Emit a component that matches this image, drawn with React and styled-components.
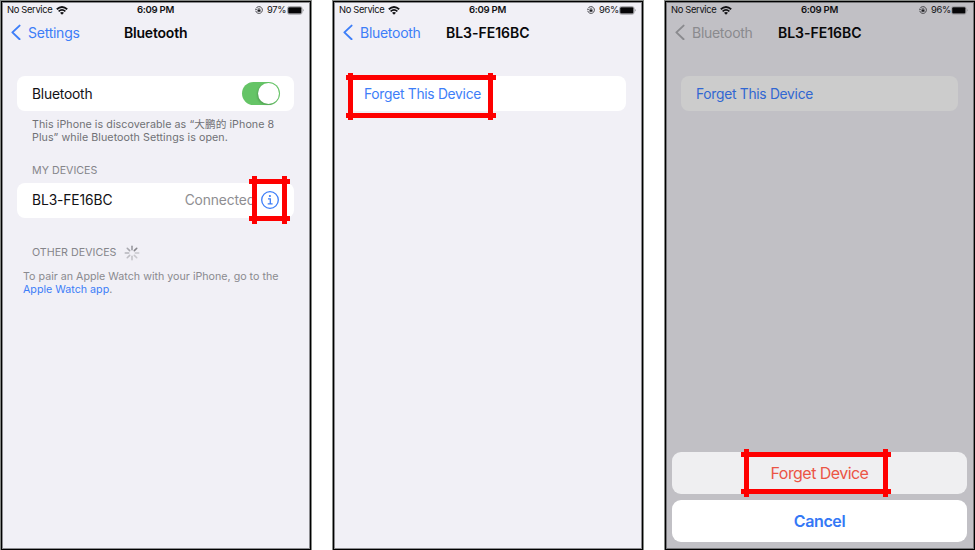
import React from "react";
import styled, { createGlobalStyle } from "styled-components";

const GlobalStyle = createGlobalStyle`
  *, *::before, *::after { box-sizing: border-box; }
  body { margin: 0; background: #fff; overflow: hidden; }
`;

const Page = styled.main`
  display: grid;
  grid-template-columns: repeat(3, 312px);
  column-gap: 20px;
  width: 975px;
  height: 550px;
  overflow: hidden;
  background: #fff;
  color: #111114;
  font-family: Inter, "Noto Sans CJK SC", sans-serif;
  white-space: nowrap;
`;

const Phone = styled.section`
  position: relative;
  display: flex;
  flex-direction: column;
  width: 312px;
  height: 551px;
  padding: 2px 2px 0;
  border: 1px solid #858885;
  border-bottom-color: #000;
  background: ${(p) => (p.$dimmed ? "#c1c0c5" : "#f1f0f6")};
  box-shadow: inset 0 0 0 1px #000, inset 0 0 0 2px ${(p) => (p.$dimmed ? "#77777a" : "#8c8c90")};
`;

const StatusBar = styled.header`
  display: grid;
  grid-template-columns: 1fr auto 1fr;
  align-items: center;
  height: 14px;
  padding: 0 5px 0 4px;
  font-size: 9.4px;
  line-height: 14px;
`;

const Carrier = styled.span`
  display: flex;
  align-items: center;
  gap: 4px;
  letter-spacing: -0.35px;
`;

const Clock = styled.span`
  font-size: 9.6px;
  font-weight: 600;
  letter-spacing: -0.3px;
`;

const Battery = styled.span`
  display: flex;
  align-items: center;
  justify-content: flex-end;
  letter-spacing: -0.35px;
`;

const Percent = styled.span`
  width: 18px;
  margin: 0 2px 0 4px;
`;

const NavBar = styled.nav`
  display: flex;
  align-items: center;
  height: 30px;
  padding-left: 7px;
`;

const Back = styled.div`
  display: flex;
  align-items: center;
  gap: 7px;
  width: ${(p) => p.$width}px;
  color: ${(p) => (p.$dimmed ? "#8a8a8e" : "#3d7ef8")};
  font-size: 14px;
  letter-spacing: ${(p) => p.$spacing}px;
`;

const Title = styled.h1`
  flex: 1;
  margin: 0;
  font-size: 14px;
  font-weight: 600;
  letter-spacing: ${(p) => p.$spacing}px;
  color: #08080a;
`;

const Card = styled.div`
  display: flex;
  align-items: center;
  width: 277px;
  height: 35px;
  margin: ${(p) => p.$top}px 0 0 14px;
  padding: 0 14px 0 15px;
  border-radius: 8px;
  background: ${(p) => (p.$dimmed ? "#cccccc" : "#fff")};
`;

const Label = styled.span`
  font-size: 13.8px;
  letter-spacing: ${(p) => p.$spacing || 0}px;
  color: ${(p) => p.$color || "#111114"};
`;

const Value = styled.span`
  margin: 0 6px 0 auto;
  font-size: 13.8px;
  letter-spacing: -0.12px;
  color: #8e8e92;
`;

const Toggle = styled.div`
  display: flex;
  justify-content: flex-end;
  align-items: center;
  width: 38px;
  height: 23px;
  margin-left: auto;
  padding-right: 1px;
  border-radius: 12px;
  background: #65c466;
`;

const Knob = styled.i`
  width: 21px;
  height: 21px;
  border-radius: 50%;
  background: #fff;
  box-shadow: -1px 1px 2px rgba(0, 0, 0, 0.18);
`;

const Note = styled.p`
  margin: ${(p) => p.$top}px 0 0 ${(p) => p.$left}px;
  font-size: 10.7px;
  line-height: 13.3px;
  letter-spacing: ${(p) => p.$spacing}px;
  color: ${(p) => p.$color};
`;

const Line = styled.span`
  display: block;
  height: 13.3px;
`;

const Link = styled.span`
  color: #3d7ef8;
`;

const SectionHead = styled.h2`
  display: flex;
  align-items: center;
  gap: 8px;
  height: 16px;
  margin: ${(p) => p.$top}px 0 0 29px;
  font-size: 10.7px;
  font-weight: 400;
  color: #85858a;
`;

const ActionSheet = styled.div`
  display: flex;
  flex-direction: column;
  gap: 6px;
  margin: auto 6px 8px 5px;
`;

const SheetButton = styled.button`
  height: 42px;
  padding: 0;
  border: 0;
  border-radius: 9px;
  background: ${(p) => (p.$cancel ? "#fff" : "#efeff1")};
  color: ${(p) => (p.$cancel ? "#3478f6" : "#eb5545")};
  font: ${(p) => (p.$cancel ? 600 : 400)} 16px Inter, sans-serif;
  letter-spacing: ${(p) => (p.$cancel ? -0.4 : -0.55)}px;
`;

const Highlight = styled.div`
  position: absolute;
  left: ${(p) => p.$x}px;
  top: ${(p) => p.$y}px;
  width: ${(p) => p.$w}px;
  height: ${(p) => p.$h}px;

  &::before,
  &::after {
    content: "";
    position: absolute;
    border: 0 solid #fe0000;
  }
  &::before {
    inset: ${(p) => p.$over}px 0;
    border-width: 5px 0;
  }
  &::after {
    inset: 0 3px 0 ${(p) => p.$over}px;
    border-width: 0 5px;
  }
`;

const Icon = styled.svg`
  display: block;
  flex: none;
`;

const InfoButton = styled.span`
  display: flex;
  margin-right: 1px;
`;

const WifiIcon = () => (
  <Icon width="12" height="9" viewBox="0 0 12 9" fill="none" stroke="#111114">
    <path d="M.8 3.2Q6-1.3 11.2 3.2" strokeWidth="1.8" />
    <path d="M2.6 5.3Q6 2.3 9.4 5.3" strokeWidth="1.6" />
    <path d="M4 6.7Q6 5.1 8 6.7L6 8.8Z" fill="#111114" stroke="none" />
  </Icon>
);

const LockIcon = () => (
  <Icon width="8" height="8" viewBox="0 0 8 8" fill="none" stroke="#3d3d42">
    <path d="M1 2.4A3.4 3.4 0 1 1 .7 4.8" strokeWidth=".9" />
    <path d="M0 2.7L1 4L2.2 2.9" strokeWidth=".7" />
    <rect x="2.5" y="3.6" width="3" height="2.2" rx=".3" fill="#222226" stroke="none" />
    <path d="M3.1 3.7V3.1a.9.9 0 0 1 1.8 0v.6" strokeWidth=".6" />
  </Icon>
);

const BatteryIcon = () => (
  <Icon width="17" height="9" viewBox="0 0 17 9" fill="none">
    <rect x=".5" y=".5" width="14.6" height="7.8" rx="2" stroke="#99999d" strokeWidth=".8" />
    <rect x="1.2" y="1.2" width="13.2" height="6.4" rx="1" fill="#060608" />
    <path d="M15.9 3v2.6q.9-.3.9-1.3T15.9 3Z" fill="#99999d" />
  </Icon>
);

const ChevronIcon = () => (
  <Icon width="11" height="16" viewBox="0 0 11 16" fill="none" stroke="currentColor">
    <path d="M9.6 1.6L2.4 8.4L9.6 15.2" strokeWidth="1.9" strokeLinecap="round" strokeLinejoin="round" />
  </Icon>
);

const InfoIcon = () => (
  <Icon width="18" height="18" viewBox="0 0 18 18" fill="none" stroke="#3d7ef8">
    <circle cx="9" cy="9" r="8.3" strokeWidth="1.3" />
    <circle cx="8.9" cy="5" r="1.1" fill="#3d7ef8" stroke="none" />
    <path d="M7 7.8H9.3V12.8M6.7 12.9H11.6" strokeWidth="1.3" />
  </Icon>
);

const spokes = ["#9a9aa0", "#85858a", "#c8c8cd", "#c8c8cd", "#c4c4c9", "#bebec4", "#b4b4ba", "#a8a8ae"];

const Spinner = () => (
  <Icon width="16" height="16" viewBox="0 0 16 16" strokeWidth="1.6" strokeLinecap="round">
    {spokes.map((color, i) => (
      <path key={i} d="M8 1.3V4.7" stroke={color} transform={`rotate(${i * 45} 8 8)`} />
    ))}
  </Icon>
);

const Status = ({ charge }) => (
  <StatusBar>
    <Carrier>No Service <WifiIcon /></Carrier>
    <Clock>6:09 PM</Clock>
    <Battery><LockIcon /><Percent>{charge}</Percent><BatteryIcon /></Battery>
  </StatusBar>
);

const Nav = ({ back, backWidth, backSpacing, title, spacing, dimmed }) => (
  <NavBar>
    <Back $dimmed={dimmed} $width={backWidth} $spacing={backSpacing}><ChevronIcon />{back}</Back>
    <Title $spacing={spacing}>{title}</Title>
  </NavBar>
);

export default function App() {
  return (
    <>
      <GlobalStyle />
      <Page>
        <Phone>
          <Status charge="97%" />
          <Nav back="Settings" backWidth={114} backSpacing={-0.25} title="Bluetooth" spacing={-0.2} />
          <Card $top={29}>
            <Label $spacing={-0.2}>Bluetooth</Label>
            <Toggle><Knob /></Toggle>
          </Card>
          <Note $top={7} $left={29} $spacing={0.06} $color="#707075">
            <Line>This iPhone is discoverable as “大鹏的 iPhone 8</Line>
            <Line>Plus” while Bluetooth Settings is open.</Line>
          </Note>
          <SectionHead $top={18}>MY DEVICES</SectionHead>
          <Card $top={4}>
            <Label $spacing={-0.1}>BL3-FE16BC</Label>
            <Value>Connected</Value>
            <InfoButton><InfoIcon /></InfoButton>
          </Card>
          <SectionHead $top={27}>OTHER DEVICES <Spinner /></SectionHead>
          <Note $top={9} $left={20} $spacing={0} $color="#8a8a8f">
            <Line>To pair an Apple Watch with your iPhone, go to the</Line>
            <Line><Link>Apple Watch app</Link>.</Line>
          </Note>
          <Highlight $x={248} $y={175} $w={41} $h={48} $over={3} />
        </Phone>

        <Phone>
          <Status charge="96%" />
          <Nav back="Bluetooth" backWidth={104} backSpacing={-0.28} title="BL3-FE16BC" spacing={-0.02} />
          <Card $top={29}>
            <Label $spacing={-0.28} $color="#3d7ef8">Forget This Device</Label>
          </Card>
          <Highlight $x={13} $y={72} $w={150} $h={47} $over={2} />
        </Phone>

        <Phone $dimmed>
          <Status charge="96%" />
          <Nav back="Bluetooth" backWidth={104} backSpacing={-0.28} title="BL3-FE16BC" spacing={-0.02} dimmed />
          <Card $top={29} $dimmed>
            <Label $spacing={-0.28} $color="#3067d2">Forget This Device</Label>
          </Card>
          <ActionSheet>
            <SheetButton>Forget Device</SheetButton>
            <SheetButton $cancel>Cancel</SheetButton>
          </ActionSheet>
          <Highlight $x={76} $y={448} $w={150} $h={48} $over={3} />
        </Phone>
      </Page>
    </>
  );
}
